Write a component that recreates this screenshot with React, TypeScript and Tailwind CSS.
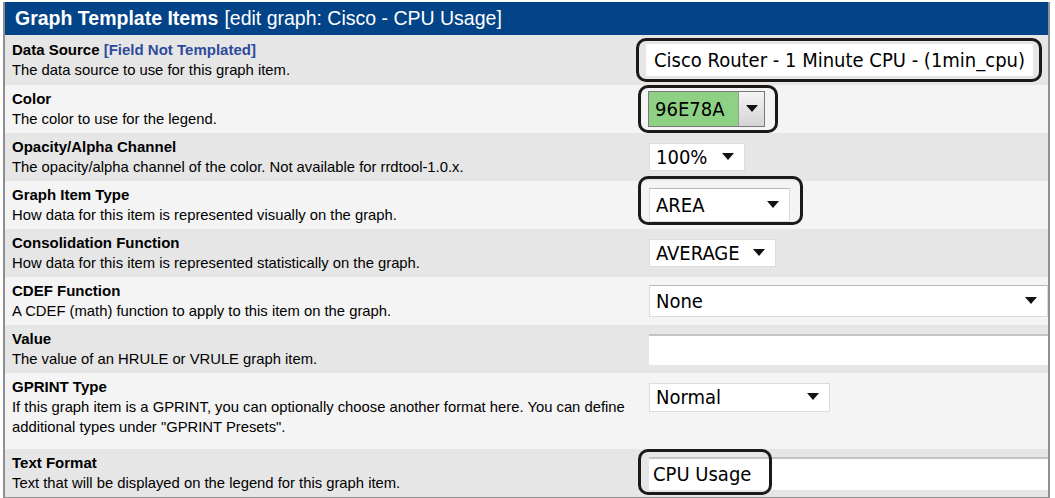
import type { ReactNode } from 'react';

// --- 小物 ---
function Arrow() {
    return (
        <svg width="12" height="8" viewBox="0 0 12 8" className="shrink-0">
            <path d="M0 0 H12 L6 7 Z" fill="#111" />
        </svg>
    );
}

function Mark({ className }: { className: string }) {
    // 注釈の黒い枠
    return <div className={`absolute border-[3px] border-[#1c1916] rounded-[10px] pointer-events-none ${className}`} />;
}

function Select({ value, className }: { value: string; className: string }) {
    return (
        <div className={`flex items-center justify-between bg-white border border-[#dcdcdc] pl-[6px] pr-[10px] text-[20px] text-black font-['DejaVu_Sans_Condensed',sans-serif] ${className}`}>
            <span>{value}</span>
            <Arrow />
        </div>
    );
}

type Row = {
    label: ReactNode;
    desc: ReactNode;
    field: ReactNode;
    tall?: boolean;
};

const rows: Row[] = [
    {
        label: <>Data Source <span className="text-[#2e4a9c]">[Field Not Templated]</span></>,
        desc: 'The data source to use for this graph item.',
        field: (
            <div className="relative w-fit">
                <div className="bg-white h-[32px] flex items-center pl-[8px] pr-[8px] text-[20px] text-black whitespace-nowrap -ml-[3px] font-['DejaVu_Sans_Condensed',sans-serif]">
                    Cisco Router - 1 Minute CPU - (1min_cpu)
                </div>
                <Mark className="-left-[13px] -right-[9px] -top-[6px] -bottom-[6px]" />
            </div>
        ),
    },
    {
        label: 'Color',
        desc: 'The color to use for the legend.',
        field: (
            <div className="relative w-fit">
                <div className="flex h-[36px] border border-[#7a7a7a] -ml-[1px]">
                    <div className="bg-[#8fd184] w-[89px] flex items-center pl-[6px] text-[20px] text-black font-['DejaVu_Sans_Condensed',sans-serif]">96E78A</div>
                    <div className="w-[26px] bg-gradient-to-b from-[#f4f4f4] to-[#d4d4d4] border-l border-[#9a9a9a] flex items-center justify-center">
                        <Arrow />
                    </div>
                </div>
                <Mark className="-left-[11px] -right-[13px] -top-[6px] -bottom-[6px]" />
            </div>
        ),
    },
    {
        label: 'Opacity/Alpha Channel',
        desc: 'The opacity/alpha channel of the color. Not available for rrdtool-1.0.x.',
        field: <Select value="100%" className="w-[96px] h-[28px]" />,
    },
    {
        label: 'Graph Item Type',
        desc: 'How data for this item is represented visually on the graph.',
        field: (
            <div className="relative w-fit">
                <Select value="AREA" className="w-[141px] h-[34px] border-t-[#b8b8b8]" />
                <Mark className="-left-[11px] -right-[13px] -top-[12px] -bottom-[3px]" />
            </div>
        ),
    },
    {
        label: 'Consolidation Function',
        desc: 'How data for this item is represented statistically on the graph.',
        field: <Select value="AVERAGE" className="w-[127px] h-[28px]" />,
    },
    {
        label: 'CDEF Function',
        desc: 'A CDEF (math) function to apply to this item on the graph.',
        field: <Select value="None" className="w-full h-[32px] border-t-[#b8b8b8]" />,
    },
    {
        label: 'Value',
        desc: 'The value of an HRULE or VRULE graph item.',
        field: <div className="w-full h-[31px] bg-white border-t-2 border-[#c4c4c4]" />,
    },
    {
        label: 'GPRINT Type',
        desc: 'If this graph item is a GPRINT, you can optionally choose another format here. You can define additional types under "GPRINT Presets".',
        field: <Select value="Normal" className="w-[181px] h-[29px] -mt-[28px]" />,
        tall: true,
    },
    {
        label: 'Text Format',
        desc: 'Text that will be displayed on the legend for this graph item.',
        field: (
            <div className="relative w-full">
                <div className="w-full h-[33px] bg-white border-t-2 border-[#c4c4c4] flex items-center pl-[4px] text-[20px] text-black font-['DejaVu_Sans_Condensed',sans-serif]">CPU Usage</div>
                <Mark className="-left-[11px] right-[276px] -top-[8px] -bottom-[5px]" />
            </div>
        ),
    },
];

// --- メイン ---
function App() {
    return (
        <div className="w-[1055px] h-[498px] bg-white pt-[2px] pl-[3px] font-['Liberation_Sans',Arial,sans-serif]">
            <div className="w-[1047px] border-2 border-[#8f8f8f] border-t-0">
                <div className="h-[33px] bg-[#034388] flex items-center pl-[10px] text-white text-[19.5px] whitespace-nowrap">
                    <span className="font-bold">Graph Template Items</span>
                    <span className="ml-[6px]">[edit graph: Cisco - CPU Usage]</span>
                </div>
                {rows.map((r, i) => (
                    <div
                        key={i}
                        className={`flex items-center ${r.tall ? 'h-[76px]' : i === 0 ? 'h-[50px]' : 'h-[48px]'} ${i % 2 === 0 ? 'bg-[#e6e6e6]' : 'bg-[#f4f4f4]'}`}
                    >
                        <div className={`w-[644px] pl-[7px] pr-[4px] text-black leading-[20px] ${r.tall ? '-mt-[8px]' : ''}`}>
                            <div className="text-[15px] font-bold">{r.label}</div>
                            <div className="text-[14.8px]">{r.desc}</div>
                        </div>
                        <div className="flex-1 flex">{r.field}</div>
                    </div>
                ))}
            </div>
        </div>
    );
}

export default App;
